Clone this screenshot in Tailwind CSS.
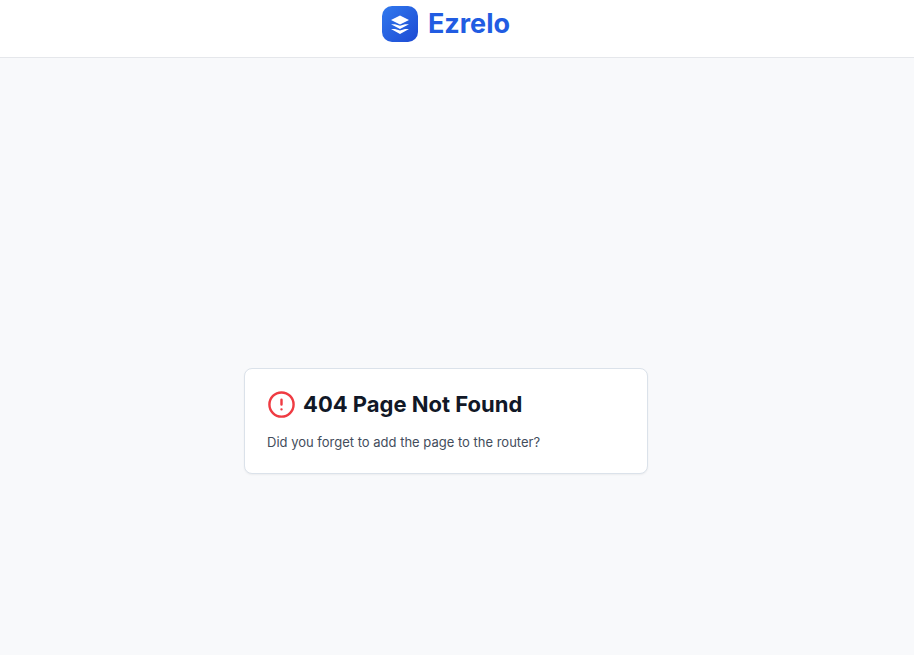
<!DOCTYPE html>
<html lang="en">
<head>
<meta charset="utf-8">
<meta name="viewport" content="width=device-width, initial-scale=1">
<title>Ezrelo</title>
<script src="https://cdn.jsdelivr.net/npm/@tailwindcss/browser@4"></script>
</head>
<body class="flex min-h-screen flex-col bg-[#f8f9fb] font-['Inter',sans-serif]">
<header class="flex justify-center border-b border-gray-200 bg-white pt-1.5 pr-[22px] pb-[15px]">
  <a href="/" class="flex items-center gap-2.5">
    <svg class="size-9" viewBox="0 0 36 36" aria-hidden="true">
      <defs><linearGradient id="brand" x1="0" y1="0" x2="1" y2="1"><stop stop-color="#3179ee"/><stop offset="1" stop-color="#1d4ad3"/></linearGradient></defs>
      <rect width="36" height="36" rx="10" fill="url(#brand)"/>
      <g fill="#fff"><path d="M18 9.6l9 4.5-9 4.3-9-4.3z"/><path d="M9 18.2h4l5 1.6 5-1.6h4l-9 4.9z"/><path d="M9 23h4l5 1.4 5-1.4h4l-9 5z"/></g>
    </svg>
    <span class="text-[27px] leading-9 font-bold text-[#215ce2]">Ezrelo</span>
  </a>
</header>
<main class="flex flex-1 flex-col items-center pt-[310px] pr-[22px]">
  <section class="w-full max-w-[404px] rounded-lg border border-[#dbe2ea] bg-white px-[22px] py-[21px] shadow-xs">
    <div class="flex items-start gap-[7px]">
      <svg class="size-[29px] text-[#ef3b42]" viewBox="0 0 24 24" fill="none" stroke="currentColor" stroke-width="2" stroke-linecap="round" aria-hidden="true"><circle cx="12" cy="12" r="10"/><path d="M12 8v4M12 16h.01"/></svg>
      <h1 class="text-[22px] leading-7 font-bold text-[#111827]">404 Page Not Found</h1>
    </div>
    <p class="mt-[13px] text-[13px] leading-5 text-[#434d5c]">Did you forget to add the page to the router?</p>
  </section>
</main>
</body>
</html>
